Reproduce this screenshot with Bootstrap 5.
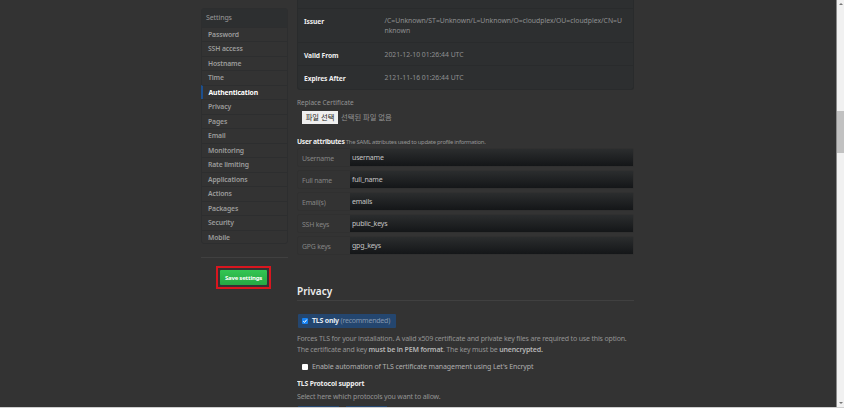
<!DOCTYPE html>
<html lang="ko">
<head>
<meta charset="utf-8">
<title>Settings</title>
<link href="https://cdn.jsdelivr.net/npm/bootstrap@5.3.0/dist/css/bootstrap.min.css" rel="stylesheet">
<style>
body{width:844px;height:408px;overflow:hidden;background:#333;color:#949494;font:7px/11px "Noto Sans","Noto Sans CJK KR",sans-serif}
.viewport{height:407px;background:#333}
.page-base{height:1px;background:#cfcfcf}
.sidebar{width:87px;margin:8px 0 0 201px}
.menu{border:1px solid #2d2e2f;border-radius:3px;height:236px}
.menu-head{height:17.5px;line-height:18px;padding-left:4px;background:#2d2f30;color:#9a9a9a;letter-spacing:-.1px}
.menu-item{height:14.5px;line-height:13px;padding-left:6px;border-top:1px solid #2d2e2f;font-weight:600;font-size:6.8px;letter-spacing:-.12px;color:#9c9c9c}
.menu-item.current{border-left:2px solid #1c4f8e;color:#fff;font-weight:700;margin-left:-1px;padding-left:5.5px}
.divider{height:1px;background:#404040;margin-top:13px}
.save-frame{width:55px;height:23px;border:2px solid #d9161f;margin:8px 0 0 15px;padding:2px}
.save-btn{width:48px;height:15px;line-height:14px;padding:0;border:0;border-radius:1px;font-size:6px;letter-spacing:-.2px;font-weight:700;color:#fff;background:linear-gradient(#34c653,#25a843)}
.content{width:337px;margin-left:9px;height:407px;overflow:hidden}
.cert{height:90px;background:#2d2f30;border:1px solid #292b2c;border-top:0;border-radius:0 0 3px 3px}
.cert-row{border-top:1px solid #292b2c;padding-left:6px}
.cert-key{width:80.5px;font-weight:700;color:#eee;font-size:6.7px;letter-spacing:-.1px}
.cert-val{color:#8f9091;font-size:6.82px;line-height:10px}
.issuer{height:34px;margin-top:8px;padding-top:7px}
.short{height:24px;padding-top:7px}
.replace{margin-top:8px;font-size:6.5px;line-height:10px}
.file-row{height:13px;margin:3px 0 0 5px;font-size:7.3px;line-height:13px}
.file-btn{width:36px;background:#efefef;color:#222;text-align:center}
.file-name{margin-left:3px}
.attr-head{margin-top:12px;height:12px;line-height:12px;font-size:5.9px;letter-spacing:-.27px}
.attr-head strong{font-size:6.8px;color:#eee}
.attr{height:19px;margin-bottom:3px;border:1px solid #303030;border-radius:2px;line-height:20px;letter-spacing:-.2px}
.attr-key{width:52px;padding-left:4px;font-size:6.9px;color:#858585}
.attr-val{background:linear-gradient(#2b2d2e,#141618);padding-left:2px;line-height:18px;color:#c4c4c4}
.section-title{font-size:10px;line-height:14px;font-weight:600;color:#eee;margin:29px 0 0;height:17px;border-bottom:1px solid #404040}
.tls{width:98px;height:14px;background:#24466f;margin:13px 0 0 1px;padding-left:4px;border-radius:1px;line-height:14px;letter-spacing:-.22px}
.tls strong{color:#e6ebf2}
.tls span{color:#8597ae}
.box{width:6px;height:6px;background:#fff;border-radius:1px}
.box.on{background:#1683f5}
.box svg{display:block}
.help{margin-top:6px;line-height:10.6px;white-space:nowrap;letter-spacing:-.17px}
.help strong{font-weight:600;color:#b5b5b5}
.auto{margin:6px 0 0 5px;height:11px;color:#b0b0b0;letter-spacing:-.1px}
.proto{margin-top:6px;color:#eee;font-weight:700;font-size:6.8px;letter-spacing:-.14px}
.select-note{margin-top:2px;letter-spacing:-.17px}
.proto-row{gap:7px;margin:4px 0 0 1px}
.proto-btn{height:6px;background:#24466f;width:41px}
.bar{width:8px;height:407px;background:#f1f1f1;border-left:1px solid #8c8c8c}
.thumb{height:42px;background:#c1c1c1;margin-top:106px}
.tri{width:0;border:2px solid transparent}
.tri.up{border-bottom-color:#777;border-top:0;margin-top:3px}
.tri.down{border-top-color:#777;border-bottom:0;margin-bottom:3px}
</style>
</head>
<body>
<div class="viewport d-flex">
  <aside class="sidebar flex-shrink-0">
    <nav class="menu">
      <div class="menu-head">Settings</div>
      <div class="menu-item">Password</div><div class="menu-item">SSH access</div><div class="menu-item">Hostname</div><div class="menu-item">Time</div><div class="menu-item current">Authentication</div><div class="menu-item">Privacy</div><div class="menu-item">Pages</div><div class="menu-item">Email</div><div class="menu-item">Monitoring</div><div class="menu-item">Rate limiting</div><div class="menu-item">Applications</div><div class="menu-item">Actions</div><div class="menu-item">Packages</div><div class="menu-item">Security</div><div class="menu-item">Mobile</div>
    </nav>
    <div class="divider"></div>
    <div class="save-frame d-flex"><button class="btn save-btn">Save settings</button></div>
  </aside>
  <main class="content flex-shrink-0">
    <section class="cert d-flex flex-column">
      <div class="cert-row issuer d-flex"><div class="cert-key">Issuer</div><div class="cert-val text-nowrap">/C=Unknown/ST=Unknown/L=Unknown/O=cloudplex/OU=cloudplex/CN=U<br>nknown</div></div>
      <div class="cert-row short d-flex"><div class="cert-key">Valid From</div><div class="cert-val">2021-12-10 01:26:44 UTC</div></div>
      <div class="cert-row short d-flex"><div class="cert-key">Expires After</div><div class="cert-val">2121-11-16 01:26:44 UTC</div></div>
    </section>
    <div class="replace">Replace Certificate</div>
    <div class="file-row d-flex"><span class="file-btn">파일 선택</span><span class="file-name">선택된 파일 없음</span></div>
    <div class="attr-head"><strong>User attributes</strong> The SAML attributes used to update profile information.</div>
    <div class="attr d-flex"><div class="attr-key">Username</div><div class="attr-val flex-fill">username</div></div>
    <div class="attr d-flex"><div class="attr-key">Full name</div><div class="attr-val flex-fill">full_name</div></div>
    <div class="attr d-flex"><div class="attr-key">Email(s)</div><div class="attr-val flex-fill">emails</div></div>
    <div class="attr d-flex"><div class="attr-key">SSH keys</div><div class="attr-val flex-fill">public_keys</div></div>
    <div class="attr d-flex"><div class="attr-key">GPG keys</div><div class="attr-val flex-fill">gpg_keys</div></div>
    <h2 class="section-title">Privacy</h2>
    <div class="tls d-flex align-items-center"><i class="box on me-1"><svg width="6" height="6" viewBox="0 0 6 6"><path d="M1.2 3.1 2.5 4.4 4.8 1.6" fill="none" stroke="#fff" stroke-width="1"/></svg></i><div><strong>TLS only</strong> <span>(recommended)</span></div></div>
    <div class="help">Forces TLS for your installation. A valid x509 certificate and private key files are required to use this option.<br>The certificate and key <strong>must be in PEM format</strong>. The key must be <strong>unencrypted.</strong></div>
    <div class="auto d-flex align-items-center"><i class="box me-1"></i><span>Enable automation of TLS certificate management using Let's Encrypt</span></div>
    <div class="proto">TLS Protocol support</div>
    <div class="select-note">Select here which protocols you want to allow.</div>
    <div class="proto-row d-flex"><span class="proto-btn"></span><span class="proto-btn"></span></div>
  </main>
  <div class="bar ms-auto d-flex flex-column align-items-center flex-shrink-0"><i class="tri up"></i><div class="thumb w-100"></div><i class="tri down mt-auto"></i></div>
</div>
<div class="page-base"></div>
<script src="https://cdn.jsdelivr.net/npm/bootstrap@5.3.0/dist/js/bootstrap.bundle.min.js"></script>
</body>
</html>
